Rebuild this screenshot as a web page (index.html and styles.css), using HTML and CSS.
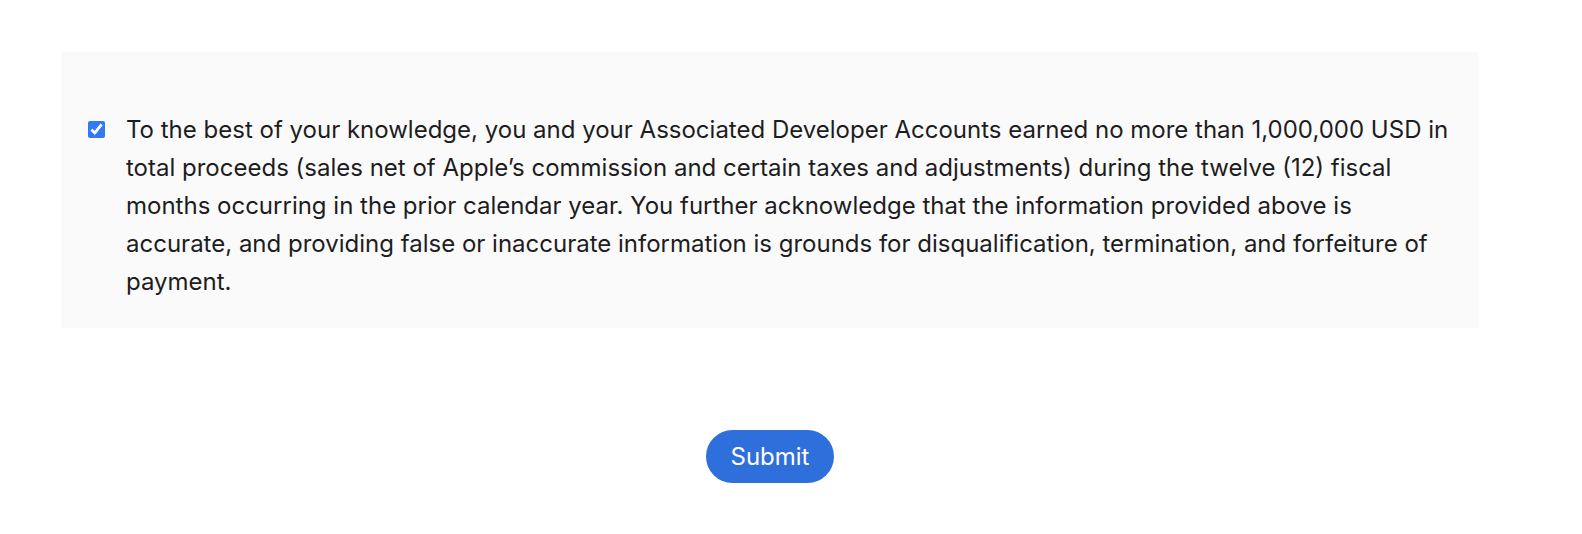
FILE: index.html
```html
<!DOCTYPE html>
<html>
<head>
<meta charset="utf-8">
<link rel="stylesheet" href="styles.css">
</head>
<body>
<div class="container">
  <div class="panel">
    <label class="row">
      <input type="checkbox" class="check" checked>
      <span class="text">To the best of your knowledge, you and your Associated Developer Accounts earned no more than 1,000,000 USD in total proceeds (sales net of Apple’s commission and certain taxes and adjustments) during the twelve (12) fiscal months occurring in the prior calendar year. You further acknowledge that the information provided above is accurate, and providing false or inaccurate information is grounds for disqualification, termination, and forfeiture of payment.</span>
    </label>
  </div>
  <div class="actions">
    <button class="submit">Submit</button>
  </div>
</div>
</body>
</html>
```
FILE: styles.css
```css
html, body {
  margin: 0;
  padding: 0;
  background: #ffffff;
}
body {
  font-family: Inter, "Noto Sans", sans-serif;
  color: #1d1d1f;
}
.container {
  margin-left: 61px;
  width: 1418px;
  padding-top: 52px;
}
.panel {
  background: #fafafa;
  padding: 59px 25px 27px 27px;
}
.row {
  display: flex;
  align-items: flex-start;
  gap: 21px;
}
.check {
  margin: 10px 0 0 0;
  width: 17px;
  height: 17px;
  flex: none;
  accent-color: #3478f6;
}
.text {
  font-size: 24px;
  line-height: 38px;
  letter-spacing: 0;
}
.actions {
  display: flex;
  justify-content: center;
  padding-top: 102px;
}
.submit {
  width: 128px;
  height: 53px;
  border: none;
  border-radius: 27px;
  background: #2f6fdb;
  color: #ffffff;
  font-family: Inter, "Noto Sans", sans-serif;
  font-size: 24px;
  padding: 0;
}
```
